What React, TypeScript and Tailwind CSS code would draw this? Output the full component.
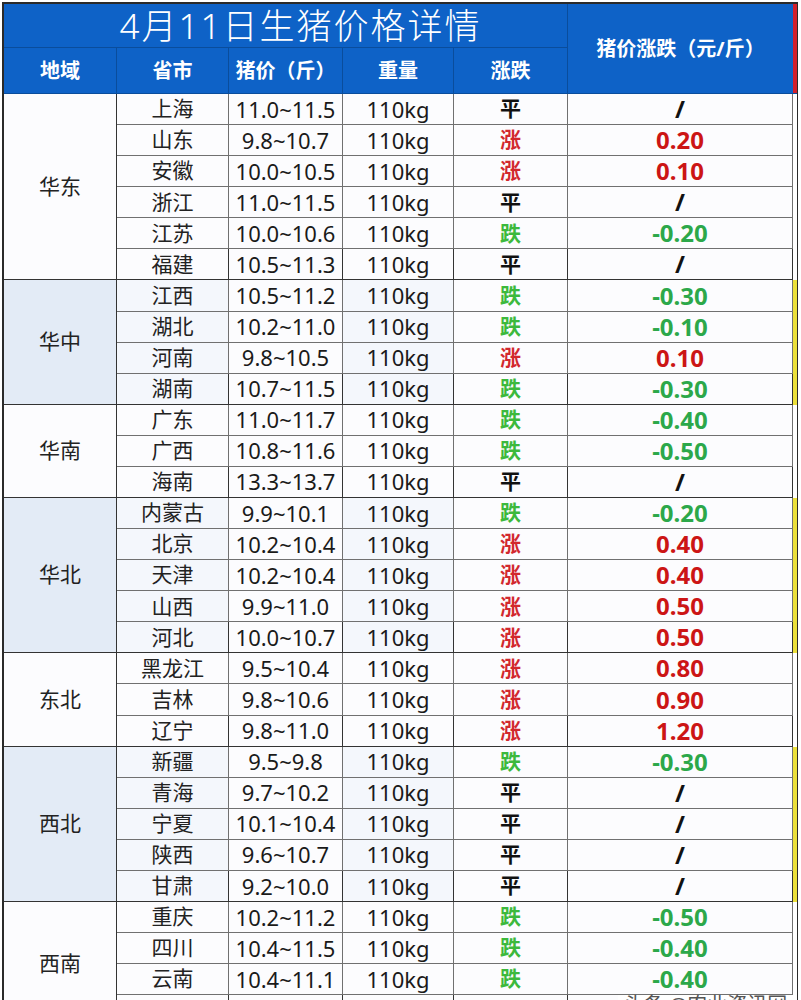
import React from "react";

type Trend = "涨" | "跌" | "平";

interface Row {
  city: string;
  price: string;
  trend: Trend;
  change: string;
}

interface Group {
  region: string;
  shaded: boolean;
  rows: Row[];
}

const groups: Group[] = [
  {
    region: "华东",
    shaded: false,
    rows: [
      { city: "上海", price: "11.0~11.5", trend: "平", change: "/" },
      { city: "山东", price: "9.8~10.7", trend: "涨", change: "0.20" },
      { city: "安徽", price: "10.0~10.5", trend: "涨", change: "0.10" },
      { city: "浙江", price: "11.0~11.5", trend: "平", change: "/" },
      { city: "江苏", price: "10.0~10.6", trend: "跌", change: "-0.20" },
      { city: "福建", price: "10.5~11.3", trend: "平", change: "/" },
    ],
  },
  {
    region: "华中",
    shaded: true,
    rows: [
      { city: "江西", price: "10.5~11.2", trend: "跌", change: "-0.30" },
      { city: "湖北", price: "10.2~11.0", trend: "跌", change: "-0.10" },
      { city: "河南", price: "9.8~10.5", trend: "涨", change: "0.10" },
      { city: "湖南", price: "10.7~11.5", trend: "跌", change: "-0.30" },
    ],
  },
  {
    region: "华南",
    shaded: false,
    rows: [
      { city: "广东", price: "11.0~11.7", trend: "跌", change: "-0.40" },
      { city: "广西", price: "10.8~11.6", trend: "跌", change: "-0.50" },
      { city: "海南", price: "13.3~13.7", trend: "平", change: "/" },
    ],
  },
  {
    region: "华北",
    shaded: true,
    rows: [
      { city: "内蒙古", price: "9.9~10.1", trend: "跌", change: "-0.20" },
      { city: "北京", price: "10.2~10.4", trend: "涨", change: "0.40" },
      { city: "天津", price: "10.2~10.4", trend: "涨", change: "0.40" },
      { city: "山西", price: "9.9~11.0", trend: "涨", change: "0.50" },
      { city: "河北", price: "10.0~10.7", trend: "涨", change: "0.50" },
    ],
  },
  {
    region: "东北",
    shaded: false,
    rows: [
      { city: "黑龙江", price: "9.5~10.4", trend: "涨", change: "0.80" },
      { city: "吉林", price: "9.8~10.6", trend: "涨", change: "0.90" },
      { city: "辽宁", price: "9.8~11.0", trend: "涨", change: "1.20" },
    ],
  },
  {
    region: "西北",
    shaded: true,
    rows: [
      { city: "新疆", price: "9.5~9.8", trend: "跌", change: "-0.30" },
      { city: "青海", price: "9.7~10.2", trend: "平", change: "/" },
      { city: "宁夏", price: "10.1~10.4", trend: "平", change: "/" },
      { city: "陕西", price: "9.6~10.7", trend: "平", change: "/" },
      { city: "甘肃", price: "9.2~10.0", trend: "平", change: "/" },
    ],
  },
  {
    region: "西南",
    shaded: false,
    rows: [
      { city: "重庆", price: "10.2~11.2", trend: "跌", change: "-0.50" },
      { city: "四川", price: "10.4~11.5", trend: "跌", change: "-0.40" },
      { city: "云南", price: "10.4~11.1", trend: "跌", change: "-0.40" },
      // last row runs off the bottom of the shot, nothing readable in it
      { city: "", price: "", trend: "平", change: "" },
    ],
  },
];

const spanClass: Record<number, string> = {
  3: "row-span-3",
  4: "row-span-4",
  5: "row-span-5",
  6: "row-span-6",
};

const trendColor: Record<Trend, string> = {
  涨: "text-[#d2282e]",
  跌: "text-[#3cb93c]",
  平: "text-[#111]",
};

const changeColor: Record<Trend, string> = {
  涨: "text-[#cc1515]",
  跌: "text-[#2ca84a]",
  平: "text-[#111]",
};

const font = { fontFamily: '"Noto Sans", "Noto Sans CJK SC", sans-serif' };

const headCell =
  "flex items-center justify-center bg-[#0e62c7] border-r border-b border-[#0a4d9c] text-white font-bold text-[20px]";

export default function App() {
  return (
    <div className="w-[801px] h-[1000px] bg-white overflow-hidden relative pt-[2px] pl-[2px]" style={font}>
      <div className="w-[796px] border-l-2 border-t-2 border-r border-[#2a2a2a]">
        <div className="grid grid-cols-[113px_112px_114px_111px_114px_225px_4px] grid-rows-[44px_46px] auto-rows-[31.09px]">
          {/* title + header */}
          <div className="col-span-5 flex items-center justify-center pl-[30px] bg-[#0e62c7] border-r border-b border-[#0a4d9c] text-white text-[35px] font-light tracking-[2px] leading-none">
            4月11日生猪价格详情
          </div>
          <div className={`${headCell} row-span-2 border-r-0 text-[19px]`}>猪价涨跌（元/斤）</div>
          <div className="row-span-2 bg-[#d3202c] border-b border-[#0a4d9c]" />
          <div className={headCell}>地域</div>
          <div className={headCell}>省市</div>
          <div className={headCell}>猪价（斤）</div>
          <div className={headCell}>重量</div>
          <div className={headCell}>涨跌</div>

          {groups.map((g) => {
            const n = g.rows.length;
            return (
              <React.Fragment key={g.region}>
                <div
                  className={`${spanClass[n]} flex items-center justify-center border-r border-b border-[#333] text-[21px] text-[#222] ${
                    g.shaded ? "bg-[#e3ebf6]" : "bg-[#fcfcfe]"
                  }`}
                >
                  {g.region}
                </div>
                {g.rows.map((r, i) => {
                  const last = i === n - 1;
                  const line = last ? "border-[#333]" : "border-[#707070]";
                  const cell = `flex items-center justify-center border-r border-b ${line}`;
                  const tint = g.shaded ? "bg-[#f4f7fc]" : "bg-[#fcfcfe]";
                  const blank = r.city === "";
                  return (
                    <React.Fragment key={r.city || "blank"}>
                      <div className={`${cell} ${tint} text-[21px] text-[#222]`}>{r.city}</div>
                      <div className={`${cell} bg-[#fcfcfe] text-[22px] text-[#1a1a1a]`}>{r.price}</div>
                      <div className={`${cell} ${tint} text-[22px] text-[#1a1a1a]`}>{blank ? "" : "110kg"}</div>
                      <div className={`${cell} bg-[#fcfcfe] text-[21px] font-bold ${trendColor[r.trend]}`}>
                        {blank ? "" : r.trend}
                      </div>
                      <div className={`${cell} bg-[#fcfcfe] text-[24px] font-bold ${changeColor[r.trend]}`}>
                        {r.change}
                      </div>
                      {i === 0 && (
                        <div className={`${spanClass[n]} ${g.shaded ? "bg-[#ece03a]" : "bg-white"}`} />
                      )}
                    </React.Fragment>
                  );
                })}
              </React.Fragment>
            );
          })}
        </div>
      </div>
      <div className="absolute left-[618px] top-[995px] bg-white px-[6px] text-[20px] text-[#555] leading-none">
        头条 @农业资讯网
      </div>
    </div>
  );
}
